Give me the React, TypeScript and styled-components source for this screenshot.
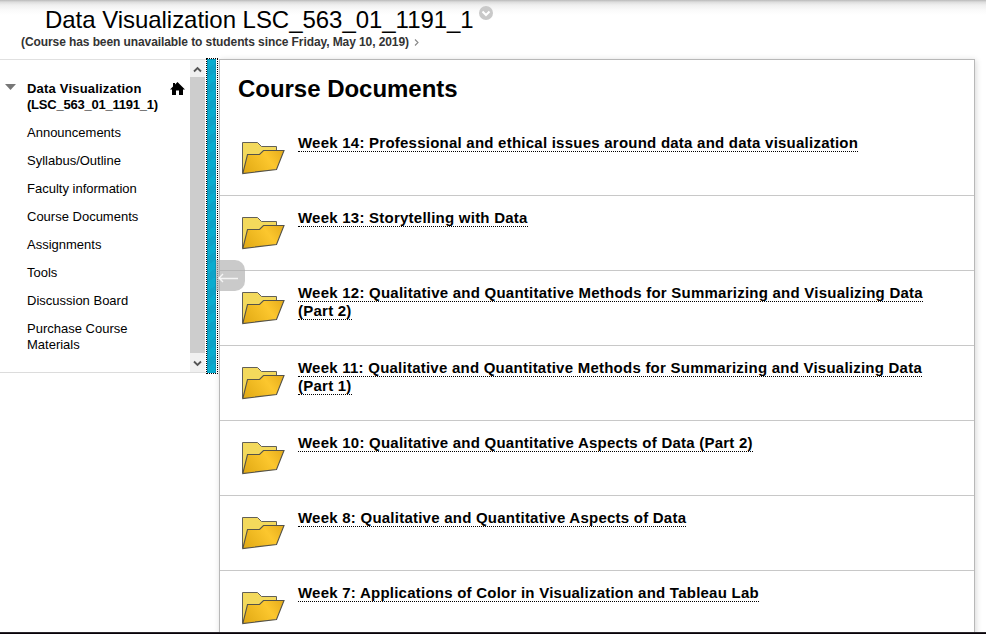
import React from "react";
import styled, { createGlobalStyle } from "styled-components";

const GlobalStyle = createGlobalStyle`
  * { box-sizing: border-box; }
  body { margin: 0; background: #fff; color: #000; font-family: "Liberation Sans", Arial, sans-serif; overflow: hidden; }
  h1, h2, h3, p, ul { margin: 0; padding: 0; font-weight: normal; }
  ul { list-style: none; }
`;

const Page = styled.div`
  width: 986px;
  height: 634px;
  display: flex;
  flex-direction: column;
  overflow: hidden;
  background: #fff;
`;

const Header = styled.header`
  height: 59px;
  flex: none;
  padding-top: 6px;
  background: linear-gradient(#b9b9b9 0, #dcdcdc 2px, #efefef 5px, #fafafa 10px, #fff 15px);
`;

const TitleRow = styled.div`
  display: flex;
  height: 28px;
  padding-left: 45px;
  gap: 5px;
  align-items: flex-start;
`;

const Title = styled.h1`
  font-size: 24px;
  line-height: 28px;
  letter-spacing: -0.04px;
  white-space: nowrap;
`;

const Notice = styled.p`
  display: flex;
  align-items: center;
  gap: 5px;
  padding-left: 21px;
  height: 16px;
  font-size: 12px;
  line-height: 16px;
  font-weight: bold;
  letter-spacing: -0.088px;
  color: #333;
  white-space: nowrap;
`;

const Body = styled.div`
  display: flex;
  flex: 1;
  min-height: 0;
  align-items: flex-start;
`;

const Sidebar = styled.nav`
  width: 206px;
  height: 314px;
  display: flex;
  border-top: 1px solid #e0e0e0;
  border-bottom: 1px solid #dcdcdc;
`;

const Menu = styled.div`
  width: 190px;
  padding-top: 21px;
  font-size: 13px;
  line-height: 16px;
`;

const CourseHead = styled.div`
  display: flex;
  height: 32px;
  margin-bottom: 12px;
  padding-left: 5px;
  & > svg { flex: none; margin-top: -1px; }
`;

const CourseName = styled.h3`
  width: 143px;
  margin-left: 11px;
  font-size: 13px;
  line-height: 16px;
  font-weight: bold;
  letter-spacing: 0.2px;
  white-space: nowrap;
`;

const CourseCode = styled.span`
  display: block;
  letter-spacing: -0.22px;
`;

const MenuItem = styled.li`
  width: 150px;
  margin: 0 0 12px 27px;
  letter-spacing: 0;
`;

const ScrollBar = styled.div`
  width: 15px;
  height: 312px;
  display: flex;
  flex-direction: column;
  justify-content: space-between;
  background: #cdcdcd;
`;

const ScrollButton = styled.div`
  height: ${(p: { $h: number }) => p.$h}px;
  display: flex;
  align-items: center;
  justify-content: center;
  padding-top: 2px;
  background: #f0f0f0;
`;

const Splitter = styled.div`
  position: relative;
  width: 12px;
  height: 316px;
  margin: -1px 1px 0 0;
  border: 1px dotted #000;
`;

const SplitterFill = styled.div`
  width: 9px;
  height: 100%;
  border: solid #0795b8;
  border-width: 1px 1px 0 1px;
  background: repeating-linear-gradient(145deg, #09accf 0 7px, #0ca3c8 7px 14px);
`;

const CollapseHandle = styled.div`
  position: absolute;
  left: 9px;
  top: 201px;
  width: 29px;
  height: 31px;
  border-radius: 0 10px 10px 0;
  background: rgba(175, 175, 175, 0.66);
  z-index: 1;
`;

const Content = styled.main`
  width: 756px;
  height: 600px;
  border: 1px solid #b8b8b8;
  box-shadow: 1px 1px 6px rgba(0, 0, 0, 0.16);
  background: #fff;
`;

const ContentTitle = styled.h2`
  height: 61px;
  padding: 15px 0 0 18px;
  font-size: 24px;
  line-height: 28px;
  font-weight: bold;
  letter-spacing: -0.03px;
`;

const DocumentRow = styled.li`
  height: 75px;
  display: flex;
  padding: 13px 0 0 21px;
  border-bottom: 1px solid #c8c8c8;
`;

const FolderSlot = styled.div`
  width: 46px;
  margin: 6px 11px 0 0;
  flex: none;
`;

const DocumentTitle = styled.h3`
  width: 650px;
  font-size: 15px;
  line-height: 18px;
  font-weight: bold;
  letter-spacing: 0.237px;
`;

const DocumentLink = styled.a`
  border-bottom: 1px dotted #000;
`;

const BottomEdge = styled.footer`
  height: 2px;
  flex: none;
  position: relative;
  z-index: 2;
  background: linear-gradient(#29252b 50%, #080208 50%);
`;

const Folder = () => (
  <svg width="46" height="36" viewBox="0 0 46 36">
    <defs>
      <linearGradient id="front" x1="0" y1="0.7" x2="1" y2="0.3">
        <stop offset="0" stopColor="#e3ac16" />
        <stop offset="0.65" stopColor="#fcc72e" />
        <stop offset="1" stopColor="#e9b11f" />
      </linearGradient>
    </defs>
    <path d="M1.5 33V2.5H16.5L20.5 6.5H35.5V12L31 29Z" fill="#f3d95c" stroke="#626058" />
    <path d="M1.8 33.5L6.5 14.5H18.5L22.5 10.5H43L35.5 29.5Z" fill="url(#front)" stroke="#555349" strokeWidth="1.1" />
  </svg>
);

const Chevron = ({ up = false }: { up?: boolean }) => (
  <svg width="9" height="7" viewBox="0 0 9 7">
    <path d={up ? "M1 5.5L4.5 2L8 5.5" : "M1 1.5L4.5 5L8 1.5"} fill="none" stroke="#555" strokeWidth="1.8" />
  </svg>
);

const menuItems = [
  "Announcements", "Syllabus/Outline", "Faculty information", "Course Documents",
  "Assignments", "Tools", "Discussion Board", "Purchase Course Materials",
];

const documents = [
  "Week 14: Professional and ethical issues around data and data visualization",
  "Week 13: Storytelling with Data",
  "Week 12: Qualitative and Quantitative Methods for Summarizing and Visualizing Data (Part 2)",
  "Week 11: Qualitative and Quantitative Methods for Summarizing and Visualizing Data (Part 1)",
  "Week 10: Qualitative and Quantitative Aspects of Data (Part 2)",
  "Week 8: Qualitative and Quantitative Aspects of Data",
  "Week 7: Applications of Color in Visualization and Tableau Lab",
];

export default function App() {
  return (
    <>
      <GlobalStyle />
      <Page>
        <Header>
          <TitleRow>
            <Title>Data Visualization LSC_563_01_1191_1</Title>
            <svg width="14" height="14" viewBox="0 0 14 14">
              <circle cx="7" cy="7" r="7" fill="#c9c9c9" />
              <path d="M3.5 5.5L7 9L10.5 5.5" fill="none" stroke="#fff" strokeWidth="2" />
            </svg>
          </TitleRow>
          <Notice>
            (Course has been unavailable to students since Friday, May 10, 2019)
            <svg width="5" height="7" viewBox="0 0 5 7">
              <path d="M1 .5L4 3.5L1 6.5" fill="none" stroke="#888" strokeWidth="1.1" />
            </svg>
          </Notice>
        </Header>
        <Body>
          <Sidebar>
            <Menu>
              <CourseHead>
                <svg width="11" height="12" viewBox="0 0 11 12"><path d="M0 4H11L5.5 10Z" fill="#777" /></svg>
                <CourseName>Data Visualization<CourseCode>(LSC_563_01_1191_1)</CourseCode></CourseName>
                <svg width="15" height="16" viewBox="0 0 15 16">
                  <path d="M7.5 2L15 9.5H13V15H9V10.5H6V15H2V9.5H0L3 6.5V3H5V4.5Z" fill="#000" />
                </svg>
              </CourseHead>
              <ul>{menuItems.map((item) => <MenuItem key={item}>{item}</MenuItem>)}</ul>
            </Menu>
            <ScrollBar>
              <ScrollButton $h={17}><Chevron up /></ScrollButton>
              <ScrollButton $h={19}><Chevron /></ScrollButton>
            </ScrollBar>
          </Sidebar>
          <Splitter>
            <SplitterFill />
            <CollapseHandle>
              <svg width="29" height="31" viewBox="0 0 29 31">
                <path d="M7 14L3 18L7 22M3 18.5H22" fill="none" stroke="#f4f4f4" strokeWidth="1.4" />
              </svg>
            </CollapseHandle>
          </Splitter>
          <Content>
            <ContentTitle>Course Documents</ContentTitle>
            <ul>
              {documents.map((title) => (
                <DocumentRow key={title}>
                  <FolderSlot><Folder /></FolderSlot>
                  <DocumentTitle><DocumentLink>{title}</DocumentLink></DocumentTitle>
                </DocumentRow>
              ))}
            </ul>
          </Content>
        </Body>
        <BottomEdge />
      </Page>
    </>
  );
}
